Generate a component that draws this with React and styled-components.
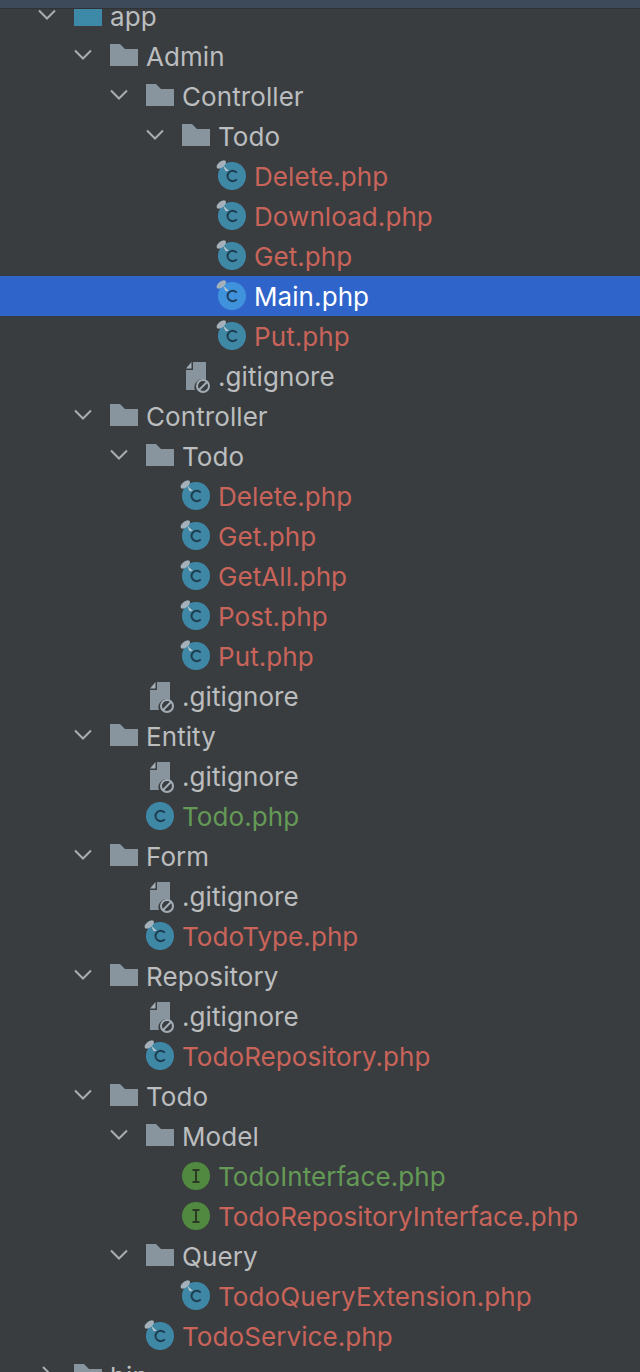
import React from "react";
import styled, { createGlobalStyle } from "styled-components";

const GlobalStyle = createGlobalStyle`
  html, body {
    margin: 0;
    padding: 0;
    background: #3a3d40;
    overflow: hidden;
  }
`;

const Page = styled.div`
  width: 640px;
  height: 1372px;
  display: flex;
  flex-direction: column;
  background: #3a3d40;
  overflow: hidden;
  font-family: Inter, "Noto Sans", sans-serif;
`;

const TopBar = styled.div`
  flex: none;
  height: 8px;
  background: #3c4a5a;
  border-bottom: 1px solid #303234;
`;

const TreeClip = styled.div`
  flex: 1;
  min-height: 0;
  overflow: hidden;
`;

const Tree = styled.ul`
  list-style: none;
  margin: -13px 0 0;
  padding: 0;
`;

const Row = styled.li`
  height: 40px;
  display: flex;
  align-items: center;
  padding-left: ${(p) => 38 + p.$depth * 36}px;
  background: ${(p) => (p.$selected ? "#2f65ca" : "transparent")};
`;

const ChevronSlot = styled.span`
  flex: none;
  width: 36px;
  height: 40px;
  display: flex;
  align-items: center;
  justify-content: flex-start;
  margin-top: -2px;
`;

const IconSlot = styled.span`
  flex: none;
  width: 28px;
  height: 28px;
  margin-right: 8px;
  display: block;

  svg {
    display: block;
    overflow: visible;
  }
`;

const statusColors = {
  plain: "#bbbdbf",
  red: "#c9645a",
  green: "#649a56",
  selected: "#ffffff",
};

const Label = styled.span`
  font-size: 26px;
  letter-spacing: 0.08px;
  line-height: 40px;
  padding-top: 2px;
  white-space: nowrap;
  color: ${(p) => statusColors[p.$status]};
`;

const Chevron = ({ open }) => (
  <svg width="18" height="18" viewBox="0 0 18 18" fill="none">
    <path
      d={open ? "M1 4.5 L9 12.5 L17 4.5" : "M5 1 L13 9 L5 17"}
      stroke="#a9adb0"
      strokeWidth="2"
    />
  </svg>
);

const FolderIcon = ({ color = "#88959f" }) => (
  <svg width="28" height="28" viewBox="0 0 28 28">
    <path d="M0 2 H10 L15 7 H28 V24 H0 Z" fill={color} />
  </svg>
);

const Pin = () => (
  <g>
    <path d="M5 3.500 L11 9 L7.500 9 Z" fill="#b9c4ca" />
    <ellipse cx="3.300" cy="2.500" rx="5.500" ry="3" transform="rotate(-38 3.300 2.500)" fill="#a4b1ba" />
  </g>
);

const ClassIcon = ({ pinned, selected }) => (
  <svg width="28" height="28" viewBox="0 0 28 28">
    <circle cx="14" cy="14" r="14" fill={selected ? "#3f92dc" : "#3e88a6"} />
    <path
      d="M18.700 10.700 A5.200 5.200 0 1 0 18.700 17.300"
      fill="none"
      stroke={selected ? "#1f3f5e" : "#1f3d4e"}
      strokeWidth="2"
    />
    {pinned && <Pin />}
  </svg>
);

const InterfaceIcon = () => (
  <svg width="28" height="28" viewBox="0 0 28 28">
    <circle cx="14" cy="14" r="14" fill="#50893f" />
    <path d="M10.500 8 H17.500 M14 8 V20 M10.500 20 H17.500" fill="none" stroke="#2b3a25" strokeWidth="2" />
  </svg>
);

const IgnoreIcon = () => (
  <svg width="28" height="28" viewBox="0 0 28 28">
    <path d="M11 0 H24 V18 A8 8 0 0 0 13 28 H4 V8 H11 Z" fill="#88959f" />
    <path d="M4 6.500 L9.500 0 V6.500 Z" fill="#a2adb5" />
    <circle cx="21" cy="24" r="6" fill="#3a3d40" stroke="#a2adb5" strokeWidth="2" />
    <path d="M17 28 L25 20" stroke="#a2adb5" strokeWidth="2" />
  </svg>
);

// [depth, kind, name, status]
const rows = [
  [0, "root", "app", "plain"],
  [1, "folder", "Admin", "plain"],
  [2, "folder", "Controller", "plain"],
  [3, "folder", "Todo", "plain"],
  [4, "pinned", "Delete.php", "red"],
  [4, "pinned", "Download.php", "red"],
  [4, "pinned", "Get.php", "red"],
  [4, "selected", "Main.php", "selected"],
  [4, "pinned", "Put.php", "red"],
  [3, "ignore", ".gitignore", "plain"],
  [1, "folder", "Controller", "plain"],
  [2, "folder", "Todo", "plain"],
  [3, "pinned", "Delete.php", "red"],
  [3, "pinned", "Get.php", "red"],
  [3, "pinned", "GetAll.php", "red"],
  [3, "pinned", "Post.php", "red"],
  [3, "pinned", "Put.php", "red"],
  [2, "ignore", ".gitignore", "plain"],
  [1, "folder", "Entity", "plain"],
  [2, "ignore", ".gitignore", "plain"],
  [2, "class", "Todo.php", "green"],
  [1, "folder", "Form", "plain"],
  [2, "ignore", ".gitignore", "plain"],
  [2, "pinned", "TodoType.php", "red"],
  [1, "folder", "Repository", "plain"],
  [2, "ignore", ".gitignore", "plain"],
  [2, "pinned", "TodoRepository.php", "red"],
  [1, "folder", "Todo", "plain"],
  [2, "folder", "Model", "plain"],
  [3, "interface", "TodoInterface.php", "green"],
  [3, "interface", "TodoRepositoryInterface.php", "red"],
  [2, "folder", "Query", "plain"],
  [3, "pinned", "TodoQueryExtension.php", "red"],
  [2, "pinned", "TodoService.php", "red"],
  [0, "closed", "bin", "plain"],
];

const icons = {
  root: <FolderIcon color="#3d8aa8" />,
  folder: <FolderIcon />,
  closed: <FolderIcon />,
  pinned: <ClassIcon pinned />,
  selected: <ClassIcon pinned selected />,
  class: <ClassIcon />,
  interface: <InterfaceIcon />,
  ignore: <IgnoreIcon />,
};

const App = () => (
  <Page>
    <GlobalStyle />
    <TopBar />
    <TreeClip>
      <Tree>
        {rows.map(([depth, kind, name, status], i) => (
          <Row key={i} $depth={depth} $selected={kind === "selected"}>
            <ChevronSlot>
              {(kind === "root" || kind === "folder") && <Chevron open />}
              {kind === "closed" && <Chevron />}
            </ChevronSlot>
            <IconSlot>{icons[kind]}</IconSlot>
            <Label $status={status}>{name}</Label>
          </Row>
        ))}
      </Tree>
    </TreeClip>
  </Page>
);

export default App;
